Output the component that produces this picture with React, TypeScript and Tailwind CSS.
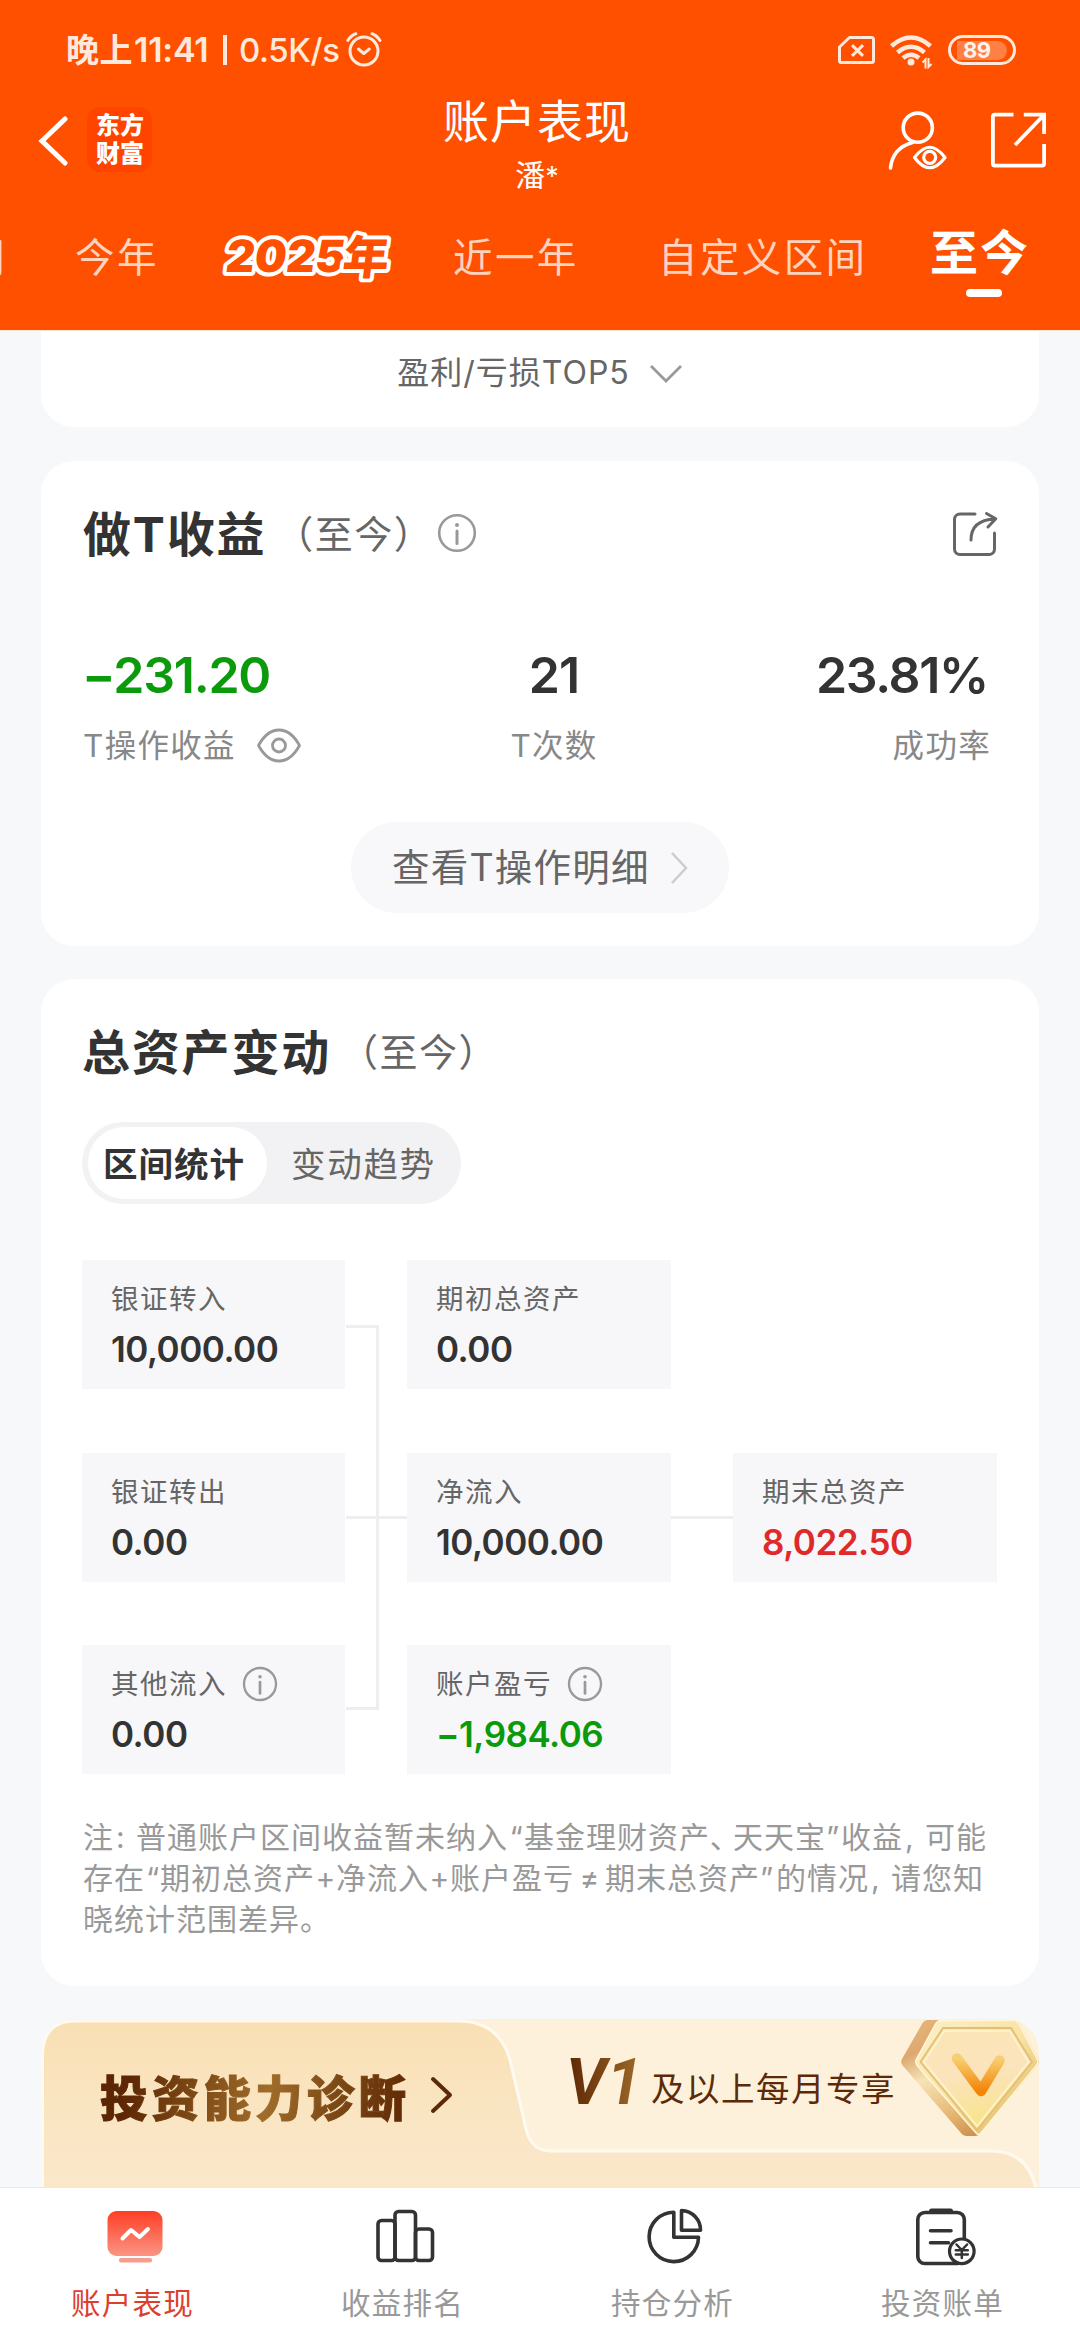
import React from "react";
import type { ReactNode } from "react";

function StatusBar() {
  return (
    <div className="flex h-[100px] items-center text-[#ffe9dc]">
      <div className="ml-[66px] flex h-[34px] w-[280px] items-center whitespace-nowrap leading-[34px]">
        <span className="text-[33px] font-semibold tracking-[0.5px] w-[68px]">晚上</span>
        <span className="w-[86px] text-[34px] font-semibold tracking-[-0.2px]">11:41</span>
        <span className="h-[30px] w-[4px] bg-[#ffe9dc] ml-[3px] mr-[12px]" />
        <span className="text-[33px] font-medium tracking-[-0.4px]">0.5K/s</span>
      </div>
      <svg className="h-[36px] w-[36px]" viewBox="346 33 36 36" fill="none" stroke="currentColor" strokeWidth="3" strokeLinecap="round" strokeLinejoin="round">
        <circle cx="364" cy="52" r="14" />
        <path d="M358.5 50l5.3 4.5 5.4-4.5M347.8 41.5q3.5-5.3 8-6.7M380 41.5q-3.5-5.3-8-6.7" />
      </svg>
      <svg className="ml-[456px] h-[30px] w-[38px]" viewBox="838 34 38 30" fill="none" stroke="currentColor" strokeWidth="3" strokeLinejoin="round">
        <path d="M849.5 36.5h22a2 2 0 0 1 2 2v21a2 2 0 0 1-2 2h-30a2 2 0 0 1-2-2V46z" />
        <path d="M852 44.2l11 10.600M863 44.200L852 54.800" />
      </svg>
      <svg className="ml-[13px] mt-[1px] h-[36px] w-[46px]" viewBox="889 32 46 36" fill="none" stroke="currentColor" strokeWidth="4.500">
        <path d="M891.500 45Q911 28 930.500 45M897.500 51.500Q911 40 924.500 51.500M903 57Q911 50.500 919 57" />
        <circle cx="911" cy="61" r="3.500" fill="currentColor" stroke="none" />
        <path d="M922.500 61.500l3-3v9M928.500 57v9l3-3" strokeWidth="2" />
      </svg>
      <div className="ml-[13px] flex h-[30px] w-[68px] items-center justify-center rounded-full border-[3px] border-current">
        <div className="flex h-[19px] w-[50px] items-center rounded-r-[10px] bg-[#ff7f45] pl-[6px] text-[22px] font-bold leading-[19px] tracking-[-0.5px] text-[#fff4ec]">89</div>
      </div>
    </div>
  );
}

function TitleBar() {
  return (
    <div className="flex h-[100px] text-white">
      <svg className="ml-[36px] mt-[13px] h-[56px] w-[32px]" viewBox="36 113 32 56" fill="none" stroke="currentColor" strokeWidth="5">
        <path d="M65 119L42 141l23 22" strokeLinecap="round" />
      </svg>
      <div className="ml-[19px] mt-[7px] h-[65px] w-[65px] rounded-[13px] bg-[#ff4400] pl-[9px] pt-[5px] text-[24px] font-black leading-[28px]">
        <div>东方</div>
        <div>财富</div>
      </div>
      <div className="ml-[192px] w-[386px] text-center">
        <div className="mt-[-4px] h-[50px] text-[46px] leading-[50px] tracking-[1px]">账户表现</div>
        <div className="mt-[14px] h-[30px] text-[30px] leading-[30px]">潘<span className="text-[27px]">*</span></div>
      </div>
      <svg className="ml-[156px] mt-[10px] h-[64px] w-[64px]" viewBox="886 110 64 64" fill="none" stroke="currentColor" strokeWidth="3.600" strokeLinecap="round">
        <circle cx="917.800" cy="127.700" r="14.600" />
        <path d="M890.500 168q2-20 22-25.500" />
        <path d="M914.500 157.500q15.200-20.500 30.500 0q-15.300 20.500-30.500 0z" strokeWidth="3.200" strokeLinejoin="round" />
        <circle cx="929.700" cy="157.300" r="6" strokeWidth="3.200" />
      </svg>
      <svg className="ml-[38px] mt-[10px] h-[60px] w-[60px]" viewBox="988 110 60 60" fill="none" stroke="currentColor" strokeWidth="3.800">
        <path d="M1013.500 114.600h-18.600a2 2 0 0 0-2 2v47a2 2 0 0 0 2 2h47.200a2 2 0 0 0 2-2V144M1023.800 114.600h20.300V134M1015 145l29-30" />
      </svg>
    </div>
  );
}

function PeriodTabs() {
  return (
    <div className="mt-[28px] flex h-[60px] overflow-hidden whitespace-nowrap pt-[8px] text-[39.500px] leading-[44px] tracking-[2.400px] text-[#ffd3bd]">
      <div className="w-[75px]"><span className="ml-[-31px]">月</span></div>
      <div className="w-[140px]">今年</div>
      <div className="mt-[-8px] w-[238px]">
        <svg className="h-[56px] w-[182px] tracking-normal" viewBox="215 228 182 56" fill="#ff5000" stroke="#fff" strokeWidth="8" strokeLinejoin="round" paintOrder="stroke" fontWeight="900">
          <g transform="translate(224.500 272) skewX(-7)">
            <text fontSize="44.500">
              <tspan x="0" y="0">2025</tspan>
              <tspan x="117" y="1.500" fontSize="46">年</tspan>
            </text>
          </g>
        </svg>
      </div>
      <div className="w-[205px]">近一年</div>
      <div className="w-[272px]">自定义区间</div>
      <div className="mt-[-7px] h-[50px] text-[48px] leading-[48px] font-bold tracking-[2px] text-white">至今</div>
    </div>
  );
}

function InfoIcon({ className }: { className: string }) {
  return (
    <svg className={className} viewBox="0 0 40 40" fill="none" stroke="#999" strokeWidth="2.600">
      <circle cx="20" cy="20" r="17.800" />
      <path d="M20 18v12.500" strokeWidth="3" strokeLinecap="round" />
      <circle cx="20" cy="12" r="2" fill="#999" stroke="none" />
    </svg>
  );
}

function CardTitle({ title, children }: { title: string; children?: ReactNode }) {
  return (
    <div className="flex h-[50px] items-center whitespace-nowrap leading-[50px]">
      <h2 className="mt-[1px] text-[48px] font-bold tracking-[1.800px] text-[#333]">{title}</h2>
      <span className="ml-[9px] text-[38px] tracking-[1.500px] text-[#666]">（至今）</span>
      {children}
    </div>
  );
}

function TradeCard() {
  return (
    <section className="mt-[34px] h-[485px] rounded-[33px] bg-white px-[42px] pt-[48px]">
      <CardTitle title="做T收益">
        <InfoIcon className="ml-[4px] mt-[-2px] h-[40px] w-[40px]" />
        <svg className="ml-auto mr-[-2px] h-[48px] w-[48px]" viewBox="951 509 48 48" fill="none" stroke="#666" strokeWidth="3" strokeLinecap="round" strokeLinejoin="round">
          <path d="M975 513h-15a5.500 5.500 0 0 0-5.500 5.500V548a5.500 5.500 0 0 0 5.500 5.500h29.500A5.500 5.500 0 0 0 994.500 548V532" />
          <path d="M971 539q0-20 24-21M986.500 512.500l9.300 5.300-7.800 8.200" />
        </svg>
      </CardTitle>
      <div className="mt-[92px] flex justify-between">
        <div className="w-[250px]">
          <div className="ml-[-1px] h-[48px] whitespace-nowrap text-[50px] font-semibold leading-[48px] tracking-[-1.200px] text-[#0b9a0b]">−231.20</div>
          <div className="mt-[24px] flex h-[46px] items-center text-[31.500px] tracking-[1.300px] text-[#888]">
            T操作收益
            <svg className="ml-[19px] mt-[-2px] h-[36px] w-[48px]" viewBox="254 726 48 36" fill="none" stroke="#999" strokeWidth="2.800">
              <path d="M257.500 744.500Q266 729 278 729t20.500 15.500Q290 760 278 760t-20.500-15.500z" strokeLinejoin="round" />
              <circle cx="278" cy="744.500" r="6.500" />
            </svg>
          </div>
        </div>
        <div className="mr-[36px] text-center">
          <div className="h-[48px] text-[50px] font-semibold leading-[48px] tracking-[-1px] text-[#333]">21</div>
          <div className="mt-[24px] h-[46px] text-[31.500px] leading-[46px] tracking-[1.300px] text-[#888]">T次数</div>
        </div>
        <div className="mr-[6px] w-[180px] text-right">
          <div className="mr-[3px] h-[48px] whitespace-nowrap text-[50px] font-semibold leading-[48px] tracking-[-1.300px] text-[#333]">23.81%</div>
          <div className="mt-[24px] h-[46px] text-[31.500px] leading-[46px] tracking-[1.300px] text-[#888]">成功率</div>
        </div>
      </div>
      <div className="mx-auto mt-[53px] flex h-[91px] w-[378px] items-center whitespace-nowrap rounded-full bg-[#f8f8fa] pl-[41px] pt-[2px] text-[37.500px] tracking-[1.200px] text-[#666]">
        查看T操作明细
        <svg className="ml-[20px] mt-[-2px] h-[34px] w-[20px]" viewBox="0 0 20 34" fill="none" stroke="#ccc" strokeWidth="2.500">
          <path d="M2 2l14 15L2 32" />
        </svg>
      </div>
    </section>
  );
}

function Box({ label, value, info, tone = "text-[#333]" }: { label: string; value: string; info?: boolean; tone?: string }) {
  return (
    <div className="h-[129px] bg-[#f7f7f9] pl-[29px] pt-[20px]">
      <div className="flex h-[40px] items-center whitespace-nowrap text-[27.500px] tracking-[1.500px] text-[#666]">
        {label}
        {info && <InfoIcon className="ml-[15px] mt-[-2px] h-[36px] w-[36px]" />}
      </div>
      <div className={`mt-[9px] h-[40px] whitespace-nowrap text-[35px] font-semibold leading-[40px] tracking-[-0.500px] ${tone}`}>{value}</div>
    </div>
  );
}

function AssetFlow() {
  return (
    <div className="relative mt-[56px] grid grid-cols-[263px_264px_264px] gap-x-[62px] gap-y-[63.500px]">
      <Box label="银证转入" value="10,000.00" />
      <Box label="期初总资产" value="0.00" />
      <div />
      <Box label="银证转出" value="0.00" />
      <Box label="净流入" value="10,000.00" />
      <Box label="期末总资产" value="8,022.50" tone="text-[#de2a2a]" />
      <Box label="其他流入" value="0.00" info />
      <Box label="账户盈亏" value="−1,984.06" info tone="text-[#0b9a0b]" />
      <div className="absolute left-[264px] top-[65px] h-[385px] w-[33px] border-y-[3px] border-r-[3px] border-[#eee]" />
      <div className="absolute left-[264px] top-[256px] h-[3px] w-[61px] bg-[#eee]" />
      <div className="absolute left-[589px] top-[256px] h-[3px] w-[62px] bg-[#eee]" />
    </div>
  );
}

function Mark({ className, children }: { className: string; children: string }) {
  return <span className={`inline-block tracking-[0px] ${className}`}>{children}</span>;
}

function Note() {
  return (
    <div className="ml-[1px] mt-[43px] whitespace-nowrap text-[30px] leading-[41px] tracking-[1px] text-[#999]">
      <div>
        注<Mark className="w-[22px] pl-[2px]">:</Mark>普通账户区间收益暂未纳入<Mark className="w-[16px] text-center">“</Mark>基金理财资产<Mark className="w-[23px] [font-feature-settings:'palt']">、</Mark>天天宝<Mark className="w-[15px]">”</Mark>收益<Mark className="w-[22px] pl-[2px]">,</Mark>可能
      </div>
      <div>
        存在<Mark className="w-[15px] text-center">“</Mark>期初总资产<Mark className="w-[21px] text-center">+</Mark>净流入<Mark className="w-[21px] text-center">+</Mark>账户盈亏<Mark className="w-[31px] text-center">≠</Mark>期末总资产<Mark className="w-[16px]">”</Mark>的情况<Mark className="w-[22px] pl-[2px]">,</Mark>请您知
      </div>
      <div>晓统计范围差异。</div>
    </div>
  );
}

function AssetCard() {
  return (
    <section className="mt-[33px] h-[1007px] rounded-[33px] bg-white pl-[41px] pt-[48px]">
      <CardTitle title="总资产变动" />
      <div className="mt-[45px] flex h-[82px] w-[379px] items-center rounded-full bg-[#f2f2f4] pl-[6px] text-[34.500px] tracking-[1.300px]">
        <div className="flex h-[72px] w-[179px] items-center rounded-full bg-white pl-[15px] pt-[3px] font-semibold tracking-[1px] text-[#333]">区间统计</div>
        <div className="ml-[24px] pt-[3px] tracking-[1.700px] text-[#666]">变动趋势</div>
      </div>
      <AssetFlow />
      <Note />
    </section>
  );
}

function Diamond() {
  return (
    <svg className="h-[119px] w-[140px]" viewBox="900 18 140 119" fill="none">
      <defs>
        <linearGradient id="side" x1="0" y1="0" x2="0.600" y2="1">
          <stop offset="0" stopColor="#e9b87c" />
          <stop offset="0.250" stopColor="#dda870" />
          <stop offset="0.450" stopColor="#f7e3b8" />
          <stop offset="0.750" stopColor="#e6b973" />
          <stop offset="1" stopColor="#c98a4a" />
        </linearGradient>
        <linearGradient id="rim" x1="0" y1="0" x2="1" y2="1">
          <stop offset="0" stopColor="#fdf0c8" />
          <stop offset="0.500" stopColor="#f8e3a6" />
          <stop offset="1" stopColor="#dcae55" />
        </linearGradient>
        <linearGradient id="face" x1="0" y1="0" x2="0.200" y2="1">
          <stop offset="0" stopColor="#fbe6b4" />
          <stop offset="0.500" stopColor="#fbe3bd" />
          <stop offset="1" stopColor="#f8e48c" />
        </linearGradient>
        <linearGradient id="vee" x1="0" y1="0" x2="0" y2="1">
          <stop offset="0" stopColor="#f8cf70" />
          <stop offset="1" stopColor="#f38406" />
        </linearGradient>
      </defs>
      <path d="M928 20h87q3 0 5 3l18 36q2 3.500-1 7L980 134q-2 2-5 2h-9q-3 0-5-3L903 66q-3-3.500-1-7l20-35q2-4 6-4z" fill="url(#side)" />
      <path d="M941 20.500h73q3 0 5 3l18 35.500q2 3.500-1 7l-55 67q-2.500 3-5 0L917.500 66q-3-3.500-1-7l19-35q2-3.500 5.500-3.500z" fill="url(#rim)" stroke="#fff6d8" strokeWidth="1.500" />
      <path d="M943 28h68l21 34-55 68-56.500-68z" fill="url(#face)" stroke="#e3bf74" strokeWidth="1.800" />
      <path d="M944.500 31h65l19 31-51.500 64-53-64z" stroke="#fff4cf" strokeWidth="1.500" />
      <path d="M957 58.500l24 32.500 18.500-30.500" stroke="url(#vee)" strokeWidth="10.500" strokeLinecap="round" strokeLinejoin="round" />
    </svg>
  );
}

function DiagnosisBanner() {
  return (
    <section className="relative mt-[33px] h-[169px] overflow-hidden rounded-t-[33px] bg-[#fdf1dc]">
      <svg className="absolute left-0 top-0 h-[169px] w-[998px]" viewBox="41 19 998 169">
        <defs>
          <linearGradient id="gold" x1="0" y1="0" x2="0" y2="1">
            <stop offset="0" stopColor="#f9dfb3" />
            <stop offset="0.500" stopColor="#fae5c2" />
            <stop offset="1" stopColor="#fae8cb" />
          </linearGradient>
        </defs>
        <path d="M42.500 195V56q0-35 33-35H458Q499 21 510 60L526 129Q531 151 551 151H991Q1031 151 1037 195z" fill="url(#gold)" stroke="#fffaf0" strokeWidth="3" />
      </svg>
      <div className="relative flex h-full whitespace-nowrap">
        <div className="ml-[59px] mt-[52px] h-[56px] w-[321px] bg-[linear-gradient(100deg,#5c2504_8%,#7a4714_28%,#a06c2a_52%,#7d4a16_72%,#642d07_92%)] bg-clip-text text-[47.500px] font-black leading-[56px] tracking-[4.200px] text-transparent [-webkit-text-stroke:1px_transparent]">投资能力诊断</div>
        <svg className="ml-[8px] mt-[56px] h-[40px] w-[26px]" viewBox="0 0 26 40" fill="none" stroke="#5c2a08" strokeWidth="4" strokeLinecap="round" strokeLinejoin="round">
          <path d="M4 4l17 16L4 36" />
        </svg>
        <div className="ml-[111px] mt-[31px] h-[66px] w-[77px] bg-[linear-gradient(90deg,#5c2504,#a06c2a)] bg-clip-text font-[Roboto] text-[64px] font-bold italic leading-[66px] text-transparent">V1</div>
        <div className="ml-[8px] mt-[50px] h-[40px] text-[33.500px] leading-[40px] tracking-[1.500px] text-[#5c2a08]">及以上每月专享</div>
      </div>
      <div className="absolute right-[-1px] top-[-1px]"><Diamond /></div>
    </section>
  );
}

function NavItem({ label, active, children }: { label: string; active?: boolean; children: ReactNode }) {
  return (
    <div className="flex w-[270px] flex-col items-center">
      <div className="mt-[17px] h-[62px]">{children}</div>
      <div className={`mt-[16px] mr-[5px] h-[40px] text-[29.500px] leading-[40px] tracking-[1.200px] ${active ? "text-[#dc402c]" : "text-[#999]"}`}>{label}</div>
    </div>
  );
}

function BottomNav() {
  return (
    <nav className="flex h-[153px] border-t border-[#e9e9e9] bg-white">
      <NavItem label="账户表现" active>
        <svg className="h-[62px] w-[64px]" viewBox="103 2205 64 62" fill="none">
          <defs>
            <linearGradient id="screen" x1="0" y1="0" x2="0" y2="1">
              <stop offset="0" stopColor="#ff3d24" />
              <stop offset="1" stopColor="#fb9585" />
            </linearGradient>
          </defs>
          <rect x="107.500" y="2211" width="55" height="45" rx="9" fill="url(#screen)" />
          <rect x="119" y="2258" width="33" height="4.500" rx="2" fill="#f79c8e" />
          <path d="M122.500 2238.500l8.500-8.500 8.500 7 8.500-8" stroke="#fff" strokeWidth="4" strokeLinecap="round" strokeLinejoin="round" />
        </svg>
      </NavItem>
      <NavItem label="收益排名">
        <svg className="h-[62px] w-[64px]" viewBox="373 2205 64 62" fill="none" stroke="#333" strokeWidth="3.600">
          <rect x="378" y="2220.500" width="17" height="40" rx="3.500" />
          <rect x="395" y="2211.500" width="20.500" height="49" rx="3.500" />
          <rect x="415.500" y="2229" width="17" height="31.500" rx="3.500" />
        </svg>
      </NavItem>
      <NavItem label="持仓分析">
        <svg className="h-[62px] w-[64px]" viewBox="643 2205 64 62" fill="none" stroke="#333" strokeWidth="3.600" strokeLinejoin="round">
          <path d="M673.800 2212.200A24.700 24.700 0 1 0 698.500 2237.300H673.800z" />
          <path d="M681.500 2210.500A19.500 19.500 0 0 1 700.500 2230.300H681.500z" />
        </svg>
      </NavItem>
      <NavItem label="投资账单">
        <svg className="h-[62px] w-[64px]" viewBox="913 2205 64 62" fill="none" stroke="#333" strokeWidth="3.600" strokeLinecap="round" strokeLinejoin="round">
          <rect x="917.800" y="2212.500" width="46.500" height="51" rx="7" />
          <path d="M931.500 2211h19" strokeWidth="5" />
          <path d="M930.500 2230.700h20.500M930.500 2242.700h18" />
          <circle cx="961.800" cy="2251.300" r="12.300" fill="#fff" strokeWidth="3.200" />
          <path d="M956.500 2244.500l5.300 5.500 5.300-5.500M961.800 2250v8M955.800 2250.300h12M955.800 2254.500h12" strokeWidth="2.500" />
        </svg>
      </NavItem>
    </nav>
  );
}

export default function App() {
  return (
    <div className="flex h-[2340px] w-[1080px] flex-col overflow-hidden bg-[#f7f8fa] font-['Inter','Noto_Sans_CJK_SC',sans-serif]">
      <header className="h-[330px] shrink-0 bg-[#ff5000]">
        <StatusBar />
        <TitleBar />
        <PeriodTabs />
        <div className="ml-[966px] mt-[1px] h-[8px] w-[36px] rounded-full bg-white" />
      </header>
      <main className="min-h-0 flex-1 overflow-hidden border-t border-[#ffe6d3] px-[41px]">
        <section className="flex h-[96px] justify-center rounded-b-[33px] bg-white pt-[22px] text-[32px] leading-[40px] tracking-[1px] text-[#666]">
          盈利/亏损TOP5
          <svg className="ml-[19px] mt-[11px] h-[20px] w-[34px]" viewBox="0 0 34 20" fill="none" stroke="#999" strokeWidth="2.800">
            <path d="M2 2l15 15L32 2" />
          </svg>
        </section>
        <TradeCard />
        <AssetCard />
        <DiagnosisBanner />
      </main>
      <BottomNav />
    </div>
  );
}
